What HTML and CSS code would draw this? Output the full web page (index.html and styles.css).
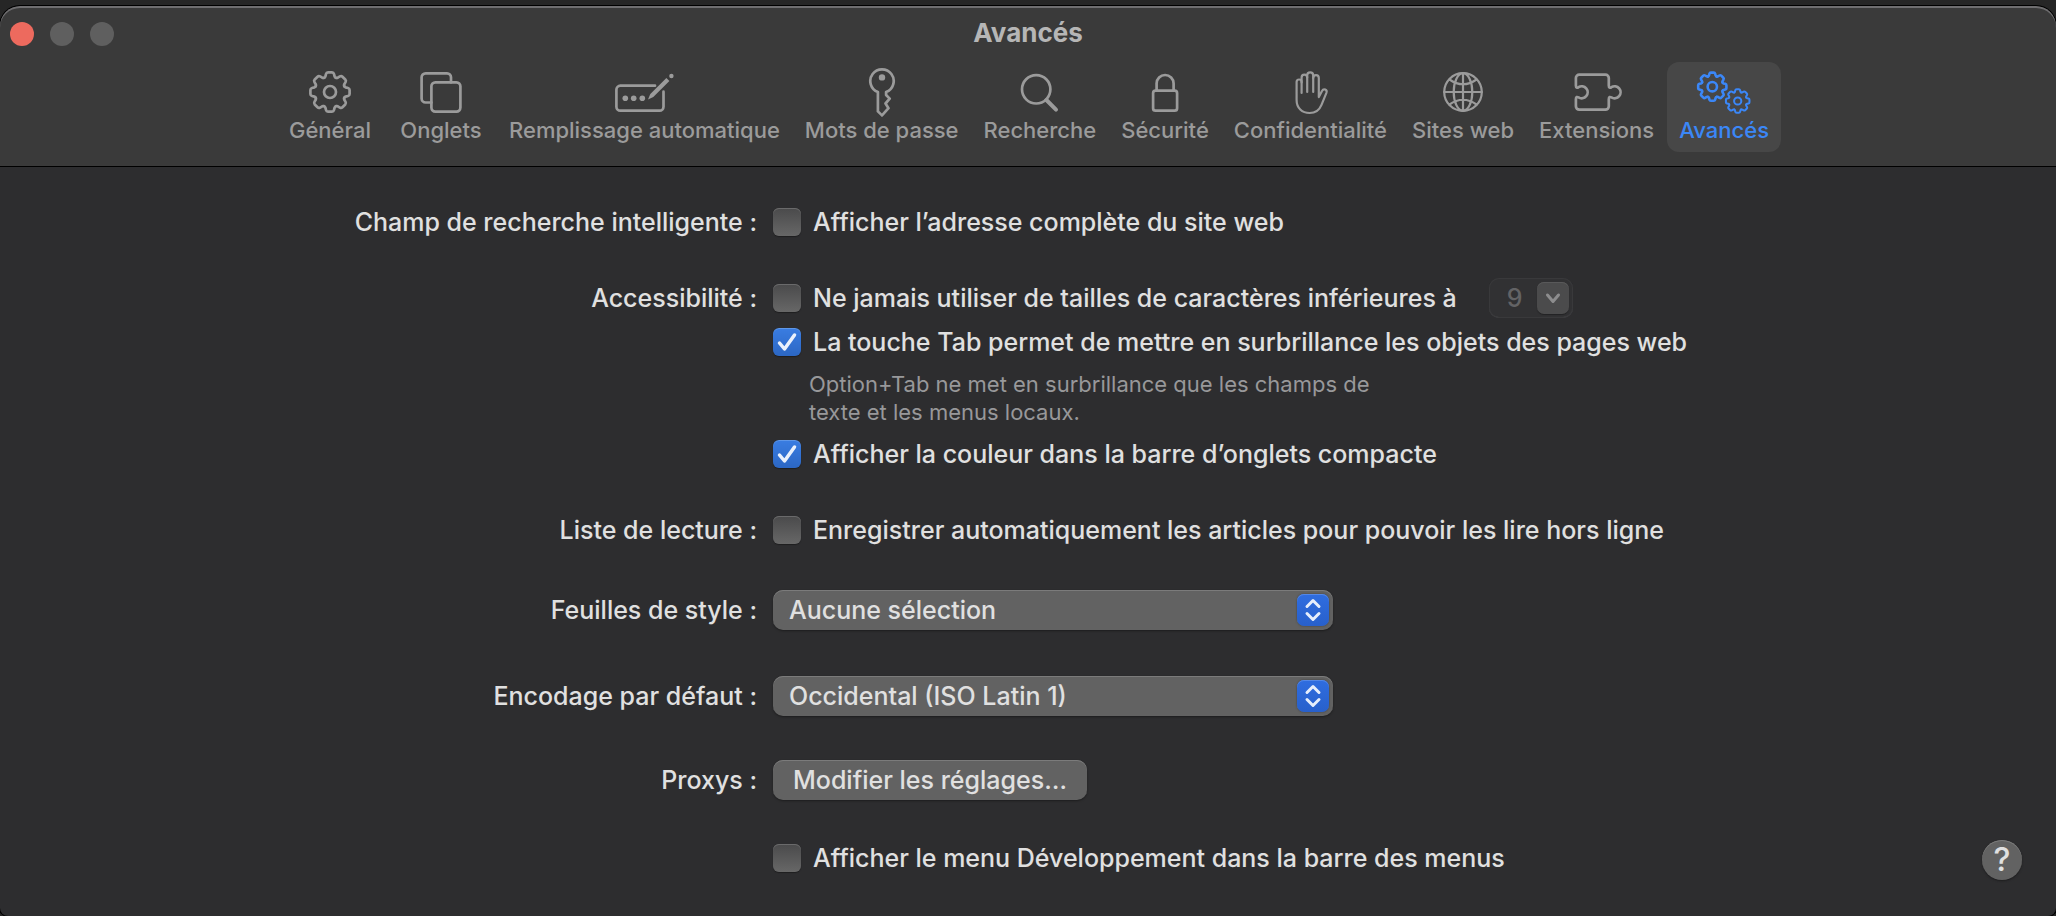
FILE: index.html
```html
<!DOCTYPE html>
<html lang="fr">
<head>
    <meta charset="UTF-8">
    <meta name="viewport" content="width=device-width, initial-scale=1.0">
    <title>Avancés</title>
    <link rel="stylesheet" href="styles.css">
</head>
<body>
    <!-- Shared gear shape, one tooth repeated eight times -->
    <svg class="defs" aria-hidden="true">
        <defs>
            <path id="tooth" d="M-5.9-14.2Q-4.9-14.6-4.6-15.6L-4-18Q-3.6-19.6-2-19.6H2Q3.6-19.6 4-18L4.6-15.6Q4.9-14.6 5.9-14.2"/>
            <g id="gear-ring">
                <use href="#tooth"/>
                <use href="#tooth" transform="rotate(45)"/>
                <use href="#tooth" transform="rotate(90)"/>
                <use href="#tooth" transform="rotate(135)"/>
                <use href="#tooth" transform="rotate(180)"/>
                <use href="#tooth" transform="rotate(225)"/>
                <use href="#tooth" transform="rotate(270)"/>
                <use href="#tooth" transform="rotate(315)"/>
            </g>
        </defs>
    </svg>

    <div class="window">
        <header class="toolbar">
            <div class="titlebar">
                <div class="lights">
                    <button class="light close" aria-label="Fermer"></button>
                    <button class="light" aria-label="Réduire" disabled></button>
                    <button class="light" aria-label="Agrandir" disabled></button>
                </div>
                <h1>Avancés</h1>
            </div>

            <nav class="tabs">
                <button class="tab">
                    <svg width="50" height="50" viewBox="0 0 50 50">
                        <g transform="translate(25 25)"><use href="#gear-ring"/><circle r="6"/></g>
                    </svg>
                    <span>Général</span>
                </button>
                <button class="tab">
                    <svg width="50" height="50" viewBox="0 0 50 50">
                        <path d="M15.4 35.5H9.6a4 4 0 0 1-4-4V10.3a4 4 0 0 1 4-4H31a4 4 0 0 1 4 4v5"/>
                        <rect x="15.4" y="15.3" width="29" height="29.3" rx="4"/>
                    </svg>
                    <span>Onglets</span>
                </button>
                <button class="tab">
                    <svg width="60" height="50" viewBox="0 0 60 50">
                        <path d="M41 18.7H6.4a4 4 0 0 0-4 4v17a4 4 0 0 0 4 4h39.1a4 4 0 0 0 4-4V24.7"/>
                        <g class="solid">
                            <circle cx="11.3" cy="31.3" r="2.8"/>
                            <circle cx="19.7" cy="31.3" r="2.8"/>
                            <circle cx="28.3" cy="31.3" r="2.8"/>
                            <path d="M34 32.4l2.3-5.3L52.4 11l3 3L39.3 30z"/>
                            <circle cx="57.4" cy="9" r="2.2"/>
                        </g>
                    </svg>
                    <span>Remplissage automatique</span>
                </button>
                <button class="tab">
                    <svg width="50" height="50" viewBox="0 0 50 50">
                        <path d="M20.9 25A11.7 11.7 0 1 1 29.1 25v3l3.6 3.6-4.2 4.9 3 4.7-6.5 7.2-4.1-4z"/>
                        <circle class="solid" cx="25" cy="10.4" r="3.2"/>
                    </svg>
                    <span>Mots de passe</span>
                </button>
                <button class="tab">
                    <svg width="50" height="50" viewBox="0 0 50 50">
                        <circle cx="21.2" cy="22.3" r="14.2"/>
                        <path class="handle" d="M31.4 33l9.6 9.6"/>
                    </svg>
                    <span>Recherche</span>
                </button>
                <button class="tab">
                    <svg width="50" height="50" viewBox="0 0 50 50">
                        <rect x="13.1" y="23.7" width="24" height="20" rx="2.5"/>
                        <path d="M16.6 23.7V16.5a8.5 8.5 0 0 1 17 0v7.2"/>
                    </svg>
                    <span>Sécurité</span>
                </button>
                <button class="tab">
                    <svg class="thin" width="50" height="50" viewBox="0 0 50 50">
                        <path d="M16.6 26V15a2.5 2.5 0 0 0-5 0v18c0 8 5.4 13 13 13 6 0 9.8-3 11.9-8.2l4.9-12c1.2-3.2-2.8-4.8-4.4-1.8L33.8 30V11a2.8 2.8 0 0 0-5.6 0"/>
                        <path d="M28.2 25V8.4a3 3 0 0 0-6 0V25"/>
                        <path d="M22.2 10.4a2.8 2.8 0 0 0-5.6 0v5"/>
                    </svg>
                    <span>Confidentialité</span>
                </button>
                <button class="tab">
                    <svg class="thin" width="50" height="50" viewBox="0 0 50 50">
                        <circle cx="25" cy="25" r="18.8"/>
                        <ellipse cx="25" cy="25" rx="9.3" ry="18.8"/>
                        <path d="M25 6.2v37.6M6.2 25h37.6M11.5 12.5Q25 22 38.5 12.5M11.5 37.5Q25 28 38.5 37.5"/>
                    </svg>
                    <span>Sites web</span>
                </button>
                <button class="tab">
                    <svg width="54" height="50" viewBox="0 0 54 50">
                        <path d="M5.9 18.4V11a3.4 3.4 0 0 1 3.4-3.4h26.1a3.4 3.4 0 0 1 3.4 3.4v7.4c0 2.6 1.3 2.5 2.6 1.8a6 6 0 1 1 0 10.2c-1.3-.7-2.6-.8-2.6 1.8v7.1a3.4 3.4 0 0 1-3.4 3.4H9.3a3.4 3.4 0 0 1-3.4-3.4v-7.1c0-2.6 1.3-2.5 2.6-1.8a6 6 0 1 0 0-10.2c-1.3.7-2.6.8-2.6-1.8z"/>
                    </svg>
                    <span>Extensions</span>
                </button>
                <button class="tab active" aria-current="page">
                    <svg width="60" height="50" viewBox="0 0 60 50">
                        <g class="gear-big" transform="translate(18.3 19.7) scale(.72)"><use href="#gear-ring"/><circle r="6.5"/></g>
                        <g class="gear-small" transform="translate(43.7 34) scale(.6)"><use href="#gear-ring"/><circle r="6"/></g>
                    </svg>
                    <span>Avancés</span>
                </button>
            </nav>
        </header>

        <main class="pane">
            <form class="settings">
                <div class="row">
                    <div class="name">Champ de recherche intelligente :</div>
                    <div class="options">
                        <label class="check"><input type="checkbox"> Afficher l’adresse complète du site web</label>
                    </div>
                </div>

                <div class="row">
                    <div class="name">Accessibilité :</div>
                    <div class="options">
                        <div class="check-line">
                            <label class="check"><input type="checkbox"> Ne jamais utiliser de tailles de caractères inférieures à</label>
                            <div class="combo">
                                <input type="text" value="9" aria-label="Taille minimale" disabled>
                                <button type="button" aria-label="Choisir une taille" disabled>
                                    <svg width="32" height="32" viewBox="0 0 32 32"><path d="M10.5 13l5.5 6.5 5.5-6.5"/></svg>
                                </button>
                            </div>
                        </div>
                        <label class="check"><input type="checkbox" checked> La touche Tab permet de mettre en surbrillance les objets des pages web</label>
                        <p class="note">Option+Tab ne met en surbrillance que les champs de<br>texte et les menus locaux.</p>
                        <label class="check"><input type="checkbox" checked> Afficher la couleur dans la barre d’onglets compacte</label>
                    </div>
                </div>

                <div class="row">
                    <div class="name">Liste de lecture :</div>
                    <div class="options">
                        <label class="check"><input type="checkbox"> Enregistrer automatiquement les articles pour pouvoir les lire hors ligne</label>
                    </div>
                </div>

                <div class="row popup-row">
                    <label class="name" for="stylesheet">Feuilles de style :</label>
                    <div class="popup">
                        <select id="stylesheet">
                            <option>Aucune sélection</option>
                        </select>
                        <svg width="32" height="32" viewBox="0 0 32 32"><path d="M10 12.5l6-6 6 6M10 19.5l6 6 6-6"/></svg>
                    </div>
                </div>

                <div class="row popup-row">
                    <label class="name" for="encoding">Encodage par défaut :</label>
                    <div class="popup">
                        <select id="encoding">
                            <option>Occidental (ISO Latin 1)</option>
                        </select>
                        <svg width="32" height="32" viewBox="0 0 32 32"><path d="M10 12.5l6-6 6 6M10 19.5l6 6 6-6"/></svg>
                    </div>
                </div>

                <div class="row">
                    <div class="name tall">Proxys :</div>
                    <div><button type="button" class="push">Modifier les réglages…</button></div>
                </div>

                <div class="row">
                    <div class="name"></div>
                    <div class="options">
                        <label class="check"><input type="checkbox"> Afficher le menu Développement dans la barre des menus</label>
                    </div>
                </div>
            </form>

            <button class="help" aria-label="Aide">?</button>
        </main>
    </div>
</body>
</html>
```

FILE: styles.css
```css
* {
    box-sizing: border-box;
}

body {
    margin: 0;
    padding-top: 6px;
    background-color: #262626;
    color: #e0e0e0;
    font-family: Inter, "Liberation Sans", sans-serif;
    font-size: 25px;
    font-weight: 500;
}

button, input, select {
    font: inherit;
    color: inherit;
    margin: 0;
    border: none;
}

.defs {
    position: absolute;
    width: 0;
    height: 0;
}

.window {
    display: flex;
    flex-direction: column;
    min-height: calc(100vh - 6px);
    background-color: #2d2d2f;
    border-radius: 20px 20px 8px 8px;
    box-shadow: 0 0 0 1px #000;
    overflow: hidden;
}

/* Toolbar */
.toolbar {
    background-color: #3a3a3a;
    border-bottom: 1px solid #000;
    border-radius: 20px 20px 0 0;
    box-shadow: inset 0 2px 0 #6f6e70;
    padding-bottom: 14px;
}

.titlebar {
    display: grid;
    grid-template-columns: 1fr auto 1fr;
    align-items: center;
    height: 56px;
    padding: 0 10px;
}

.titlebar h1 {
    margin: 0;
    font-size: 26px;
    line-height: 32px;
    font-weight: 700;
    color: #b6b6b6;
    padding-bottom: 2px;
}

.lights {
    display: flex;
    gap: 16px;
}

.light {
    width: 24px;
    height: 24px;
    padding: 0;
    border-radius: 50%;
    background-color: #5f5f5f;
}

.light.close {
    background-color: #ed6a5e;
}

.tabs {
    display: flex;
    justify-content: center;
    gap: 1px;
}

.tab {
    display: flex;
    flex-direction: column;
    align-items: center;
    min-width: 110px;
    height: 90px;
    padding: 5px 12px 0;
    background: none;
    border-radius: 12px;
    color: #9b9b9b;
    font-size: 22px;
    line-height: 26px;
    white-space: nowrap;
}

.tab.active {
    background-color: #474747;
    color: #3b87f7;
}

.tab svg {
    fill: none;
    stroke: currentColor;
    stroke-width: 2.7;
    stroke-linecap: round;
    stroke-linejoin: round;
}

.tab svg.thin {
    stroke-width: 2.2;
}

.tab .solid {
    fill: currentColor;
    stroke: none;
}

.tab .handle {
    stroke-width: 4;
}

.gear-big {
    stroke-width: 3.6;
}

.gear-small {
    stroke-width: 3.4;
}

/* Settings */
.pane {
    flex: 1;
    display: grid;
    grid-template-columns: 1fr auto 1fr;
    padding: 37px 0 36px;
}

.settings {
    grid-column: 2;
    display: flex;
    flex-direction: column;
    gap: 40px;
}

.row {
    display: grid;
    grid-template-columns: 410px 936px;
    column-gap: 16px;
    align-items: start;
}

.name {
    line-height: 36px;
    text-align: right;
}

.popup-row {
    margin: 2px 0 4px;
}

.popup-row .name, .tall {
    line-height: 40px;
}

.options {
    display: flex;
    flex-direction: column;
    align-items: flex-start;
    gap: 8px;
}

.check {
    display: flex;
    align-items: center;
    gap: 12px;
    line-height: 36px;
    white-space: nowrap;
}

.check input {
    appearance: none;
    width: 28px;
    height: 28px;
    border-radius: 6px;
    background: linear-gradient(#4a4a4b, #676767);
    box-shadow: inset 0 1px 0 #6a6a6b, 0 1px 1px #1f1f20;
}

.check input:checked {
    background: url("data:image/svg+xml,%3Csvg xmlns='http://www.w3.org/2000/svg' viewBox='0 0 28 28'%3E%3Cpath d='M6.5 15l5 6L21.5 7' fill='none' stroke='%23eaf1fc' stroke-width='3.5' stroke-linecap='round' stroke-linejoin='round'/%3E%3C/svg%3E"), linear-gradient(#3a7de2, #2c67c4);
    box-shadow: inset 0 1px 0 #5f97e8, 0 1px 1px #1f1f20;
}

.check-line {
    display: flex;
    align-items: center;
    gap: 32px;
    height: 36px;
}

.combo {
    display: flex;
    align-items: center;
    width: 84px;
    height: 40px;
    padding-right: 4px;
    border-radius: 10px;
    background-color: #313133;
    box-shadow: inset 0 0 0 1px #39393b, inset 0 -1px 0 #48484a;
}

.combo input {
    flex: 1;
    min-width: 0;
    padding: 0 0 0 18px;
    background: none;
    color: #636365;
}

.combo button {
    width: 32px;
    height: 32px;
    padding: 0;
    border-radius: 7px;
    background-color: #4b4b4c;
    box-shadow: inset 0 1px 0 #59595a, 0 1px 1px #232324;
}

.combo svg {
    display: block;
    fill: none;
    stroke: #8d8d8e;
    stroke-width: 3;
    stroke-linecap: round;
    stroke-linejoin: round;
}

.note {
    margin: 2px 0 2px 36px;
    color: #98989a;
    font-size: 22px;
    font-weight: 400;
    line-height: 28px;
}

.popup {
    position: relative;
    width: 560px;
}

.popup select {
    appearance: none;
    display: block;
    width: 100%;
    height: 40px;
    padding: 0 40px 0 16px;
}

.popup select, .push, .help {
    background-color: #626262;
    box-shadow: inset 0 1px 0 #7b7b7b, 0 1px 2px #1d1d1e;
    border-radius: 10px;
}

.popup svg {
    position: absolute;
    top: 4px;
    right: 4px;
    pointer-events: none;
    border-radius: 7px;
    background: linear-gradient(#2f6de0, #2860cb);
    box-shadow: inset 0 1px 0 #5588e6, 0 0 2px #3c3c3c;
    fill: none;
    stroke: #e6eefb;
    stroke-width: 3;
    stroke-linecap: round;
    stroke-linejoin: round;
}

.push {
    display: block;
    height: 40px;
    padding: 0 20px;
}

.help {
    grid-column: 3;
    justify-self: end;
    align-self: end;
    width: 40px;
    height: 40px;
    margin-right: 34px;
    padding: 0;
    border-radius: 50%;
    font-size: 32px;
    line-height: 40px;
}
```
